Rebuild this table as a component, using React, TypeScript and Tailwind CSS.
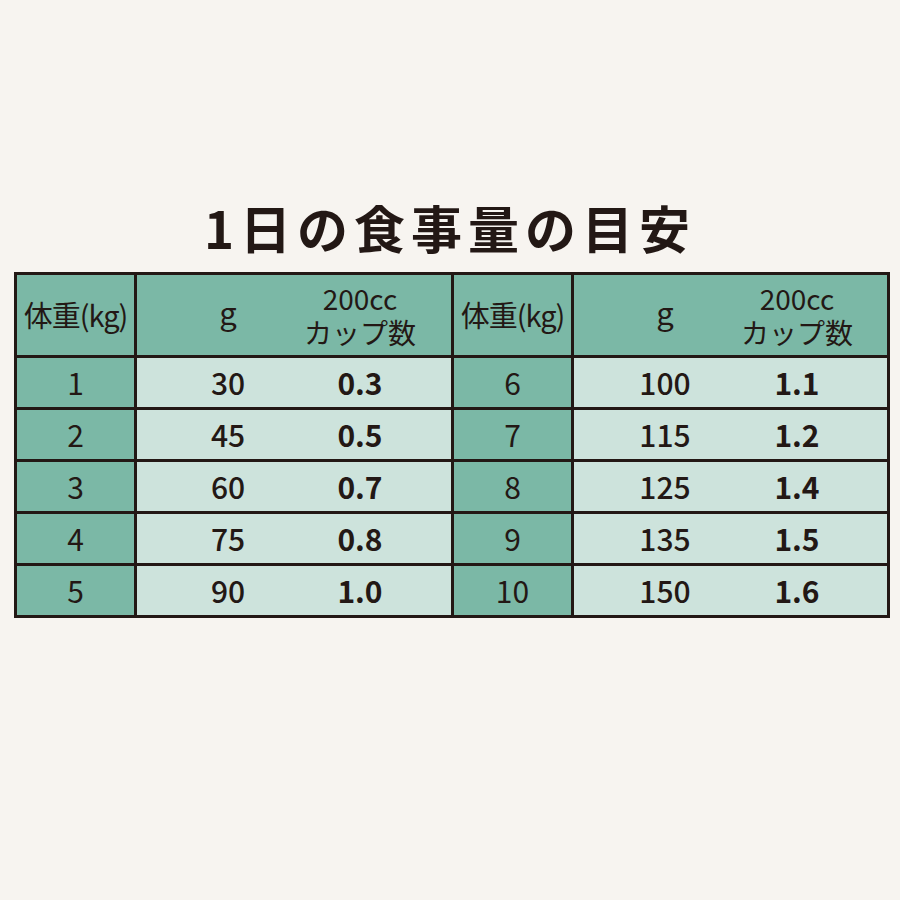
const rows = [
  { left: { kg: "1", g: "30", cup: "0.3" }, right: { kg: "6", g: "100", cup: "1.1" } },
  { left: { kg: "2", g: "45", cup: "0.5" }, right: { kg: "7", g: "115", cup: "1.2" } },
  { left: { kg: "3", g: "60", cup: "0.7" }, right: { kg: "8", g: "125", cup: "1.4" } },
  { left: { kg: "4", g: "75", cup: "0.8" }, right: { kg: "9", g: "135", cup: "1.5" } },
  { left: { kg: "5", g: "90", cup: "1.0" }, right: { kg: "10", g: "150", cup: "1.6" } },
];

const font = { fontFamily: '"Noto Sans CJK JP", "Noto Sans", sans-serif' };

function HeaderCells() {
  return (
    <>
      <div className="bg-[#7bb8a6] flex items-center justify-center text-[29px] tracking-[-1px] text-[#231815]">
        体重(kg)
      </div>
      <div className="bg-[#7bb8a6] flex items-center text-[#231815]">
        <div className="w-[100px] ml-[41px] text-center text-[31px] leading-none pb-2">g</div>
        <div className="w-[120px] ml-[22px] text-center text-[28px] leading-[34px]">
          <div>200cc</div>
          <div>カップ数</div>
        </div>
      </div>
    </>
  );
}

function DataCells({ kg, g, cup }: { kg: string; g: string; cup: string }) {
  return (
    <>
      <div className="bg-[#7bb8a6] flex items-center justify-center text-[30px] text-[#231815]">
        {kg}
      </div>
      <div className="bg-[#cde3dc] flex items-center text-[30px] text-[#231815]">
        <div className="w-[100px] ml-[41px] text-center font-medium">{g}</div>
        <div className="w-[100px] ml-[32px] text-center font-bold">{cup}</div>
      </div>
    </>
  );
}

export default function App() {
  return (
    <div className="w-[900px] h-[900px] bg-[#f7f4f0]" style={font}>
      <div className="pt-[194px] flex justify-center">
        <h1 className="text-[51px] leading-[66px] font-bold tracking-[6px] text-[#231815]">
          1日の食事量の目安
        </h1>
      </div>
      <div className="ml-[14px] mt-[12px] w-[876px] bg-[#231815] p-[3px] grid grid-cols-[117px_314px_117px_313px] grid-rows-[80px_repeat(5,49px)] gap-[3px]">
        <HeaderCells />
        <HeaderCells />
        {rows.map((r) => (
          <>
            <DataCells key={r.left.kg} {...r.left} />
            <DataCells key={r.right.kg} {...r.right} />
          </>
        ))}
      </div>
    </div>
  );
}
